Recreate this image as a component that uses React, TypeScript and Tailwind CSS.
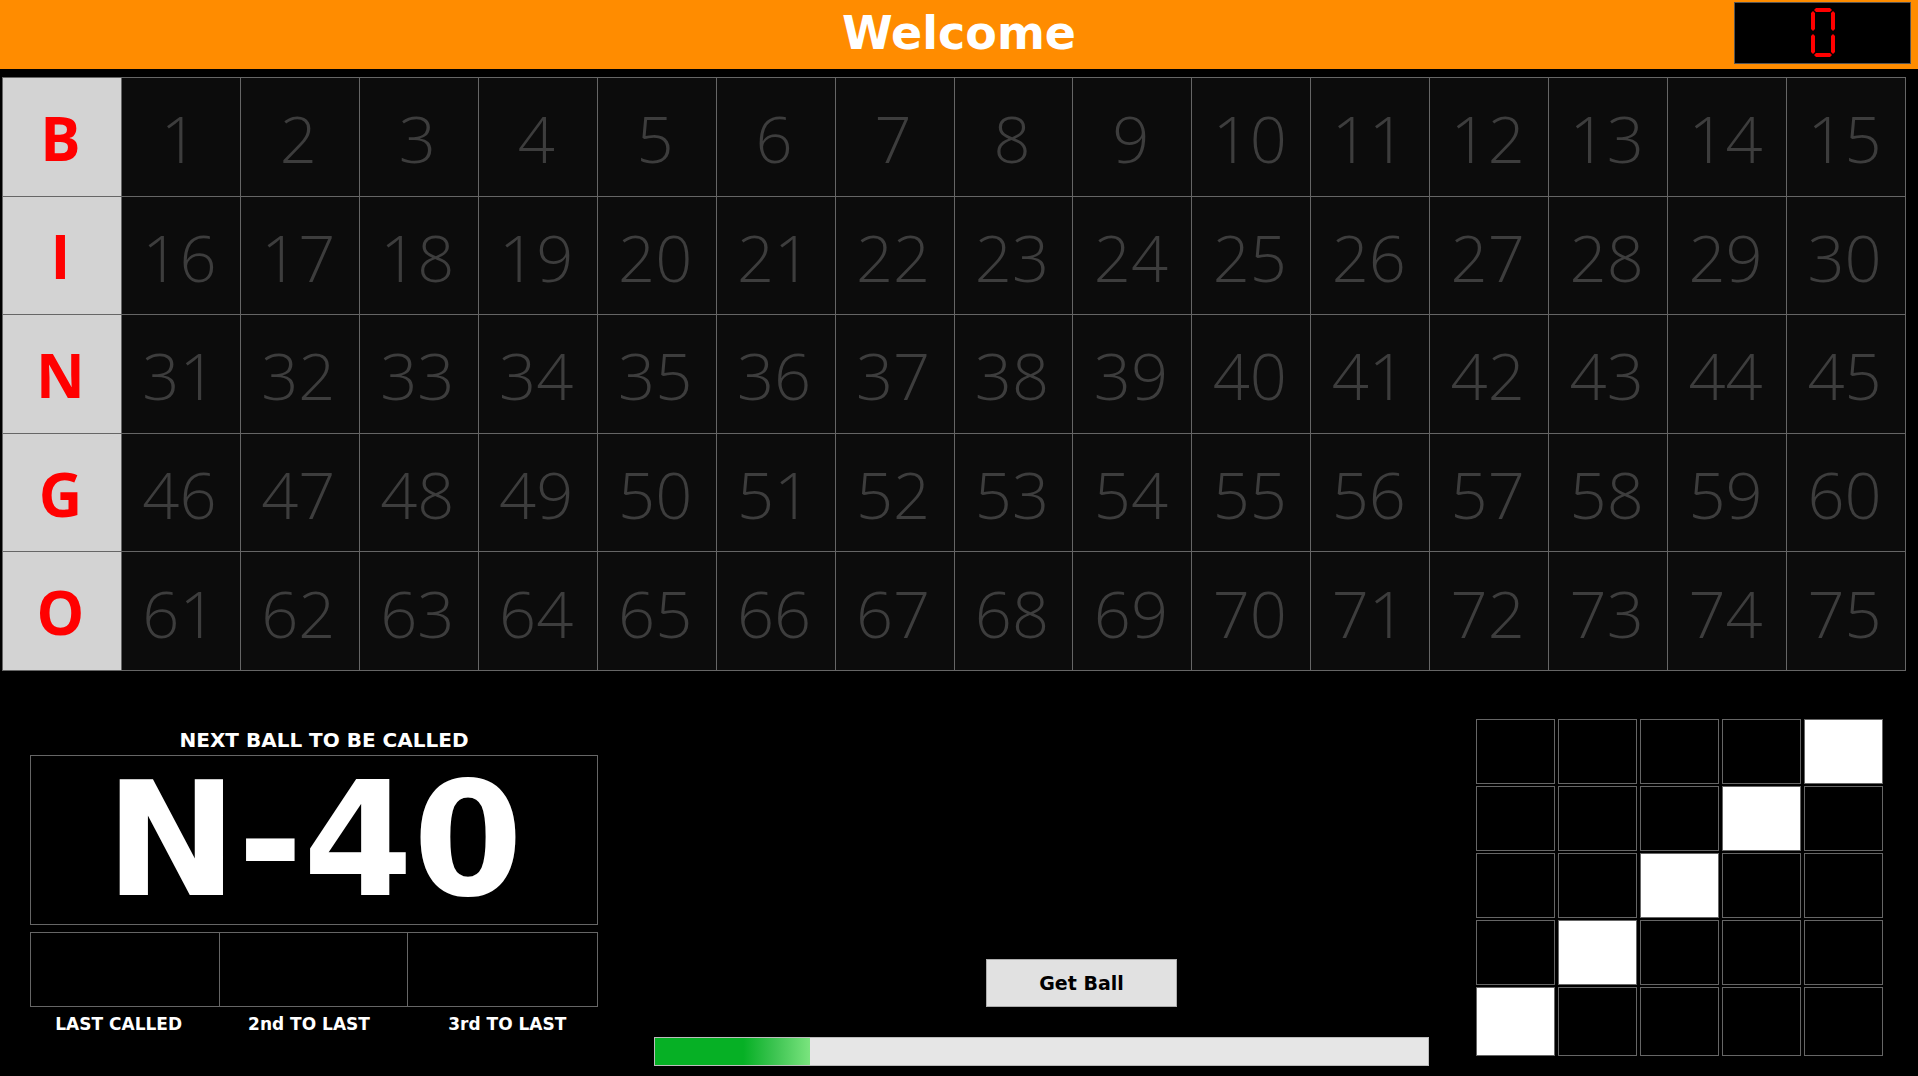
import React from "react";

const LETTERS = ["B", "I", "N", "G", "O"];
const WHITE = new Set(["0-4", "1-3", "2-2", "3-1", "4-0"]);
const DEJAVU = { fontFamily: '"DejaVu Sans", Verdana, sans-serif' };

function SevenSegZero() {
  return (
    <svg width="28" height="50" viewBox="0 0 28 50">
      <g fill="#ff0000">
        <polygon points="5,2 7,0 21,0 23,2 21,4 7,4" />
        <polygon points="2,5 4,3 6,5 6,21 4,23 2,21" />
        <polygon points="22,5 24,3 26,5 26,21 24,23 22,21" />
        <polygon points="2,28 4,26 6,28 6,44 4,46 2,44" />
        <polygon points="22,28 24,26 26,28 26,44 24,46 22,44" />
        <polygon points="5,47 7,45 21,45 23,47 21,49 7,49" />
      </g>
    </svg>
  );
}

export default function App() {
  const rows = LETTERS.map((l, r) => ({
    letter: l,
    nums: Array.from({ length: 15 }, (_, i) => r * 15 + i + 1),
  }));

  return (
    <div className="w-[1918px] h-[1076px] bg-black overflow-hidden flex flex-col">
      {/* Header */}
      <div className="h-[69px] bg-[#ff8c00] grid grid-cols-[1fr_auto_1fr] items-center shrink-0">
        <div />
        <div className="text-white font-bold text-[46px] leading-none pb-[3px]" style={DEJAVU}>
          Welcome
        </div>
        <div className="flex justify-end pr-[7px] self-start pt-[2px]">
          <div className="w-[177px] h-[62px] bg-black border border-[#555] flex items-center justify-center">
            <SevenSegZero />
          </div>
        </div>
      </div>

      {/* Board */}
      <div className="mt-[8px] ml-[2px] w-[1904px] h-[594px] bg-[#666] p-px grid grid-cols-16 grid-rows-5 gap-px shrink-0">
        {rows.map((row) => (
          <React.Fragment key={row.letter}>
            <div
              className="bg-[#d3d3d3] flex items-center justify-center text-[#ff0000] font-bold text-[60px] leading-none pt-[2px] pr-[3px]"
              style={{ fontFamily: '"Open Sans", sans-serif' }}
            >
              {row.letter}
            </div>
            {row.nums.map((n) => (
              <div
                key={n}
                className="bg-[#0c0c0c] flex items-center justify-center text-[#3d3d3d] font-light text-[65px] leading-none pt-[4px] pr-[3px]"
                style={{ fontFamily: '"Open Sans", sans-serif' }}
              >
                {n}
              </div>
            ))}
          </React.Fragment>
        ))}
      </div>

      {/* Bottom */}
      <div className="flex items-start" style={DEJAVU}>
        {/* Left panel */}
        <div className="ml-[30px] w-[568px] pt-[57px] flex flex-col">
          <div className="h-[24px] flex items-center justify-center pl-[20px] text-white font-bold text-[20px] leading-none">
            NEXT BALL TO BE CALLED
          </div>
          <div className="mt-[3px] h-[170px] border border-[#666] flex items-center justify-center">
            <span className="text-white font-bold text-[158px] leading-none">N-40</span>
          </div>
          <div className="mt-[7px] h-[75px] border border-[#666] grid grid-cols-3">
            <div className="border-r border-[#666]" />
            <div className="border-r border-[#666]" />
            <div />
          </div>
          <div className="mt-[7px] h-[20px] grid grid-cols-3 text-white font-bold text-[17px] leading-none items-center">
            <div className="text-center pr-[12px]">LAST CALLED</div>
            <div className="text-center pr-[10px]">2nd TO LAST</div>
            <div className="text-center pl-[8px]">3rd TO LAST</div>
          </div>
        </div>

        {/* Middle */}
        <div className="ml-[56px] w-[775px] pt-[288px] flex flex-col">
          <button className="ml-[332px] w-[191px] h-[48px] bg-[#e1e1e1] border border-[#adadad] text-black font-bold text-[19px] leading-none">
            Get Ball
          </button>
          <div className="mt-[30px] h-[29px] bg-[#e6e6e6] border border-[#bcbcbc] flex">
            <div className="w-1/5 h-full bg-[linear-gradient(to_right,#06b025_0%,#06b025_57%,#3fc553_78%,#7ae47e_100%)]" />
          </div>
        </div>

        {/* Right pattern grid */}
        <div className="ml-[47px] pt-[48px]">
          <div className="w-[407px] grid grid-cols-5 grid-rows-[65px_65px_65px_65px_69px] gap-x-[3px] gap-y-[2px]">
            {Array.from({ length: 25 }, (_, i) => {
              const r = Math.floor(i / 5);
              const c = i % 5;
              const on = WHITE.has(`${r}-${c}`);
              return (
                <div
                  key={i}
                  className={on ? "border border-[#666] bg-white" : "border border-[#666] bg-black"}
                />
              );
            })}
          </div>
        </div>
      </div>
    </div>
  );
}
